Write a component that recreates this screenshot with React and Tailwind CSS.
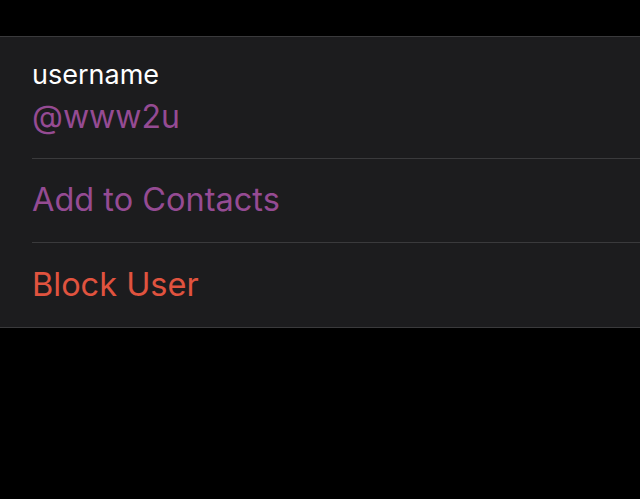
import React from 'react';

const App = () => {
  return (
    <div className="min-h-screen bg-black pt-9 font-['Inter','Noto_Sans',sans-serif]">
      <div className="border-y border-[#3a3a3c] bg-[#1c1c1e]">
        <div className="pl-8">
          <div className="flex h-[122px] flex-col justify-center border-b border-[#3a3a3c] pt-[5px]">
            <span className="text-[27px] leading-[30px] text-white">username</span>
            <span className="mt-[4px] text-[32px] leading-[46px] text-[#954b93]">@www2u</span>
          </div>
          <div className="flex h-[84px] items-center border-b border-[#3a3a3c]">
            <span className="text-[32.5px] text-[#954b93]">Add to Contacts</span>
          </div>
          <div className="flex h-[84px] items-center">
            <span className="text-[32.5px] text-[#e0533f]">Block User</span>
          </div>
        </div>
      </div>
    </div>
  );
};

export default App;
